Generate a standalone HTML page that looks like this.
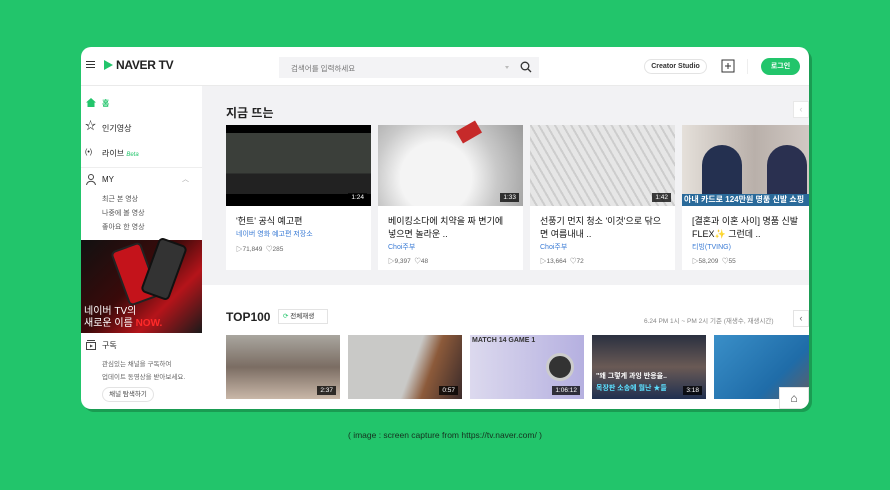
<!DOCTYPE html>
<html><head><meta charset="utf-8"><style>
*{margin:0;padding:0;box-sizing:border-box}
body{width:890px;height:490px;background:#22c56b;font-family:"Liberation Sans","Noto Sans CJK KR",sans-serif;position:relative;overflow:hidden;color:#222}
.win{position:absolute;left:81px;top:47px;width:728px;height:362px;background:#fff;border-radius:10px;overflow:hidden;box-shadow:3px 3px 0 #1a9c52}
.a{position:absolute}
.t{font-size:8px;color:#222;white-space:nowrap}
.card{position:absolute;top:78px;width:145px;height:145px;background:#fff}
.th{position:absolute;left:0;top:0;width:145px;height:81px}
.dur{position:absolute;right:4px;bottom:4px;background:rgba(0,0,0,.75);color:#fff;font-size:6.5px;padding:1px 3px}
.ct{position:absolute;left:10px;top:90px;font-size:9px;line-height:13px;color:#111;width:122px}
.ch{position:absolute;left:10px;font-size:7px;color:#3a7bd5}
.st{position:absolute;left:10px;font-size:6.5px;color:#666}
.tt{position:absolute;top:288px;width:114px;height:64px}
</style></head><body>
<div class="win">
<div class="a" style="left:5px;top:14px;width:9px;height:1.3px;background:#333;box-shadow:0 3px 0 #333,0 6px 0 #333"></div>
<svg class="a" style="left:22px;top:12px" width="11" height="12"><path d="M1 1 L10 6 L1 11Z" fill="#22c56b"/></svg>
<div class="a" style="left:35px;top:11px;font-weight:bold;font-size:12px;color:#222;letter-spacing:-.3px">NAVER TV</div>
<div class="a" style="left:198px;top:10px;width:260px;height:21px;background:#f3f3f5"></div>
<div class="a t" style="left:210px;top:16px;color:#777;font-size:7.5px">검색어를 입력하세요</div>
<div class="a" style="left:424px;top:19px;border:2.5px solid transparent;border-top:3px solid #bbb"></div>
<svg class="a" style="left:439px;top:14px" width="12" height="12"><circle cx="5" cy="5" r="3.8" fill="none" stroke="#333" stroke-width="1.3"/><path d="M8 8 L11 11" stroke="#333" stroke-width="1.3"/></svg>
<div class="a" style="left:563px;top:12px;width:63px;height:15px;border:1px solid #e3e3e3;border-radius:8px;font-size:7px;font-weight:bold;text-align:center;line-height:13px;color:#333">Creator Studio</div>
<svg class="a" style="left:640px;top:12px" width="16" height="14"><rect x="1" y="1" width="12" height="12" fill="none" stroke="#333" stroke-width="1"/><path d="M7 4v6M4 7h6" stroke="#333"/></svg>
<div class="a" style="left:666px;top:12px;width:1px;height:15px;background:#eee"></div>
<div class="a" style="left:680px;top:11px;width:39px;height:17px;background:#22c56b;border-radius:9px;color:#fff;font-size:7px;font-weight:bold;text-align:center;line-height:17px">로그인</div>
<div class="a" style="left:0;top:38px;width:728px;height:1px;background:#eaeaea"></div>
<svg class="a" style="left:5px;top:51px" width="10" height="9"><path d="M0 4.5L5 0L10 4.5H8.5V9H1.5V4.5Z" fill="#22c56b"/></svg>
<div class="a t" style="left:21px;top:51px;color:#22c56b;font-weight:bold">홈</div>
<div class="a" style="left:4px;top:74px;font-size:11px;line-height:11px">☆</div>
<div class="a t" style="left:21px;top:76px">인기영상</div>
<div class="a t" style="left:4px;top:102px;font-size:7px">(•)</div>
<div class="a t" style="left:21px;top:101px">라이브 <i style="color:#22c56b;font-size:6px">Beta</i></div>
<div class="a" style="left:0;top:120px;width:121px;height:1px;background:#eee"></div>
<svg class="a" style="left:5px;top:127px" width="10" height="11"><circle cx="5" cy="3" r="2.5" fill="none" stroke="#444"/><path d="M0.5 11 C1 6 9 6 9.5 11" fill="none" stroke="#444"/></svg>
<div class="a t" style="left:21px;top:128px">MY</div>
<div class="a t" style="left:101px;top:127px;color:#999;font-size:7px">︿</div>
<div class="a t" style="left:21px;top:147px;color:#555;font-size:7px">최근 본 영상</div>
<div class="a t" style="left:21px;top:161px;color:#555;font-size:7px">나중에 볼 영상</div>
<div class="a t" style="left:21px;top:175px;color:#555;font-size:7px">좋아요 한 영상</div>
<div class="a" style="left:0;top:193px;width:121px;height:93px;background:linear-gradient(135deg,#111 0%,#3a0a0a 45%,#b5141a 70%,#1a1a1a 100%)"></div>
<div class="a" style="left:38px;top:198px;width:32px;height:58px;background:#c4131b;transform:rotate(-20deg);border:2px solid #222;border-radius:5px"></div>
<div class="a" style="left:68px;top:193px;width:30px;height:58px;background:#333;transform:rotate(20deg);border-radius:5px;border:2px solid #111"></div>
<div class="a t" style="left:3px;top:259px;color:#fff;font-size:10px;line-height:12px">네이버 TV의<br>새로운 이름 <b style="color:#ff2a2a">NOW.</b></div>
<svg class="a" style="left:5px;top:293px" width="10" height="10"><rect x="0.5" y="2.5" width="9" height="7" fill="none" stroke="#444"/><path d="M1 0.5h8" stroke="#444"/><path d="M4 4.5L7 6L4 7.5Z" fill="#444"/></svg>
<div class="a t" style="left:21px;top:293px">구독</div>
<div class="a t" style="left:21px;top:311px;color:#666;font-size:6.5px;line-height:13px">관심있는 채널을 구독하여<br>업데이트 동영상을 받아보세요.</div>
<div class="a" style="left:21px;top:340px;width:52px;height:15px;border:1px solid #e3e3e3;border-radius:8px;font-size:6.5px;text-align:center;line-height:13px;color:#444">채널 탐색하기</div>
<div class="a" style="left:121px;top:39px;width:607px;height:199px;background:#f2f2f4"></div>
<div class="a" style="left:145px;top:57px;font-size:12px;font-weight:bold;color:#222">지금 뜨는</div>
<div class="a" style="left:712px;top:54px;width:16px;height:17px;background:#fff;border:1px solid #e8e8e8;color:#ccc;font-size:9px;text-align:center;line-height:15px">‹</div>
<div class="card" style="left:145px"><div class="th" style="background:linear-gradient(#000 0 10%,#3b3f3a 10% 60%,#222 60% 85%,#000 85%)"><div class="dur">1:24</div></div><div class="ct">'헌트' 공식 예고편</div><div class="ch" style="top:104px">네이버 영화 예고편 저장소</div><div class="st" style="top:118px">▷71,849 &nbsp;♡285</div></div>
<div class="card" style="left:297px"><div class="th" style="background:radial-gradient(circle at 40% 65%,#f4f4f4 0 35%,#c9c9c9 60%,#9a9a9a)"><div class="a" style="left:80px;top:0;width:22px;height:14px;background:#c62a2a;transform:rotate(-30deg)"></div><div class="dur">1:33</div></div><div class="ct">베이킹소다에 치약을 짜 변기에 넣으면 놀라운 ..</div><div class="ch" style="top:117px">Choi주부</div><div class="st" style="top:130px">▷9,397 &nbsp;♡48</div></div>
<div class="card" style="left:449px"><div class="th" style="background:repeating-linear-gradient(60deg,#e6e6e6 0 5px,#cdcdcd 5px 7px)"><div class="dur">1:42</div></div><div class="ct">선풍기 먼지 청소 '이것'으로 닦으면 여름내내 ..</div><div class="ch" style="top:117px">Choi주부</div><div class="st" style="top:130px">▷13,664 &nbsp;♡72</div></div>
<div class="card" style="left:601px;width:130px"><div class="th" style="background:linear-gradient(90deg,#e5e0da,#b9b0aa 50%,#d8d0cb)"><div class="a" style="left:20px;top:20px;width:40px;height:50px;background:#243050;border-radius:20px 20px 0 0"></div><div class="a" style="left:85px;top:20px;width:40px;height:50px;background:#2a3050;border-radius:20px 20px 0 0"></div><div class="a" style="left:0;bottom:0;width:145px;height:12px;background:#2a6a9a;color:#fff;font-size:8px;font-weight:bold;padding-left:2px;white-space:nowrap">아내 카드로 124만원 명품 신발 쇼핑</div></div><div class="ct" style="width:130px">[결혼과 이혼 사이] 명품 신발 FLEX✨ 그런데 ..</div><div class="ch" style="top:117px">티빙(TVING)</div><div class="st" style="top:130px">▷58,209 &nbsp;♡55</div></div>
<div class="a" style="left:145px;top:263px;font-size:12px;font-weight:bold;color:#222">TOP100</div>
<div class="a" style="left:197px;top:262px;width:50px;height:15px;border:1px solid #e3e3e3;font-size:6.5px;line-height:13px;padding-left:4px;color:#333"><span style="color:#22c56b">⟳</span> 전체재생</div>
<div class="a t" style="left:563px;top:268px;color:#888;font-size:6.5px">6.24 PM 1시 ~ PM 2시 기준 (재생수, 재생시간)</div>
<div class="a" style="left:712px;top:263px;width:16px;height:17px;background:#fff;border:1px solid #e3e3e3;color:#666;font-size:9px;text-align:center;line-height:15px">‹</div>
<div class="tt" style="left:145px;background:linear-gradient(#a9a69f,#7b6d63 50%,#c9b7a8)"><div class="dur">2:37</div></div>
<div class="tt" style="left:267px;background:linear-gradient(110deg,#c9c9c7 0 55%,#8c5a3a 70%,#3a2a2a)"><div class="dur">0:57</div></div>
<div class="tt" style="left:389px;background:linear-gradient(90deg,#dcd9ee,#b5b0e0);"><div class="a" style="left:2px;top:2px;font-size:7px;font-weight:bold;color:#333">MATCH 14 GAME 1</div><div class="a" style="left:76px;top:18px;width:28px;height:28px;border-radius:50%;background:#333;border:3px solid #ccc"></div><div class="dur">1:06:12</div></div>
<div class="tt" style="left:511px;background:linear-gradient(#2a3040,#6a5a55 50%,#203050)"><div class="a" style="left:4px;top:36px;font-size:7px;font-weight:bold;color:#fff;white-space:nowrap">"왜 그렇게 과잉 반응을..</div><div class="a" style="left:4px;top:48px;font-size:7px;font-weight:bold;color:#5ce0ff;white-space:nowrap">목장판 소송에 뭘난 ★들</div><div class="dur">3:18</div></div>
<div class="tt" style="left:633px;background:linear-gradient(135deg,#3a8fc8,#1f6ca8 60%,#7a5a4a)"></div>
<div class="a" style="left:698px;top:340px;width:30px;height:22px;background:#fff;border:1px solid #e3e3e3;font-size:12px;text-align:center;line-height:20px;color:#444">⌂</div>
</div>
<div class="a" style="left:0;top:430px;width:890px;text-align:center;font-size:8.5px;color:#16301f">( image : screen capture from https://tv.naver.com/ )</div>
</body></html>
